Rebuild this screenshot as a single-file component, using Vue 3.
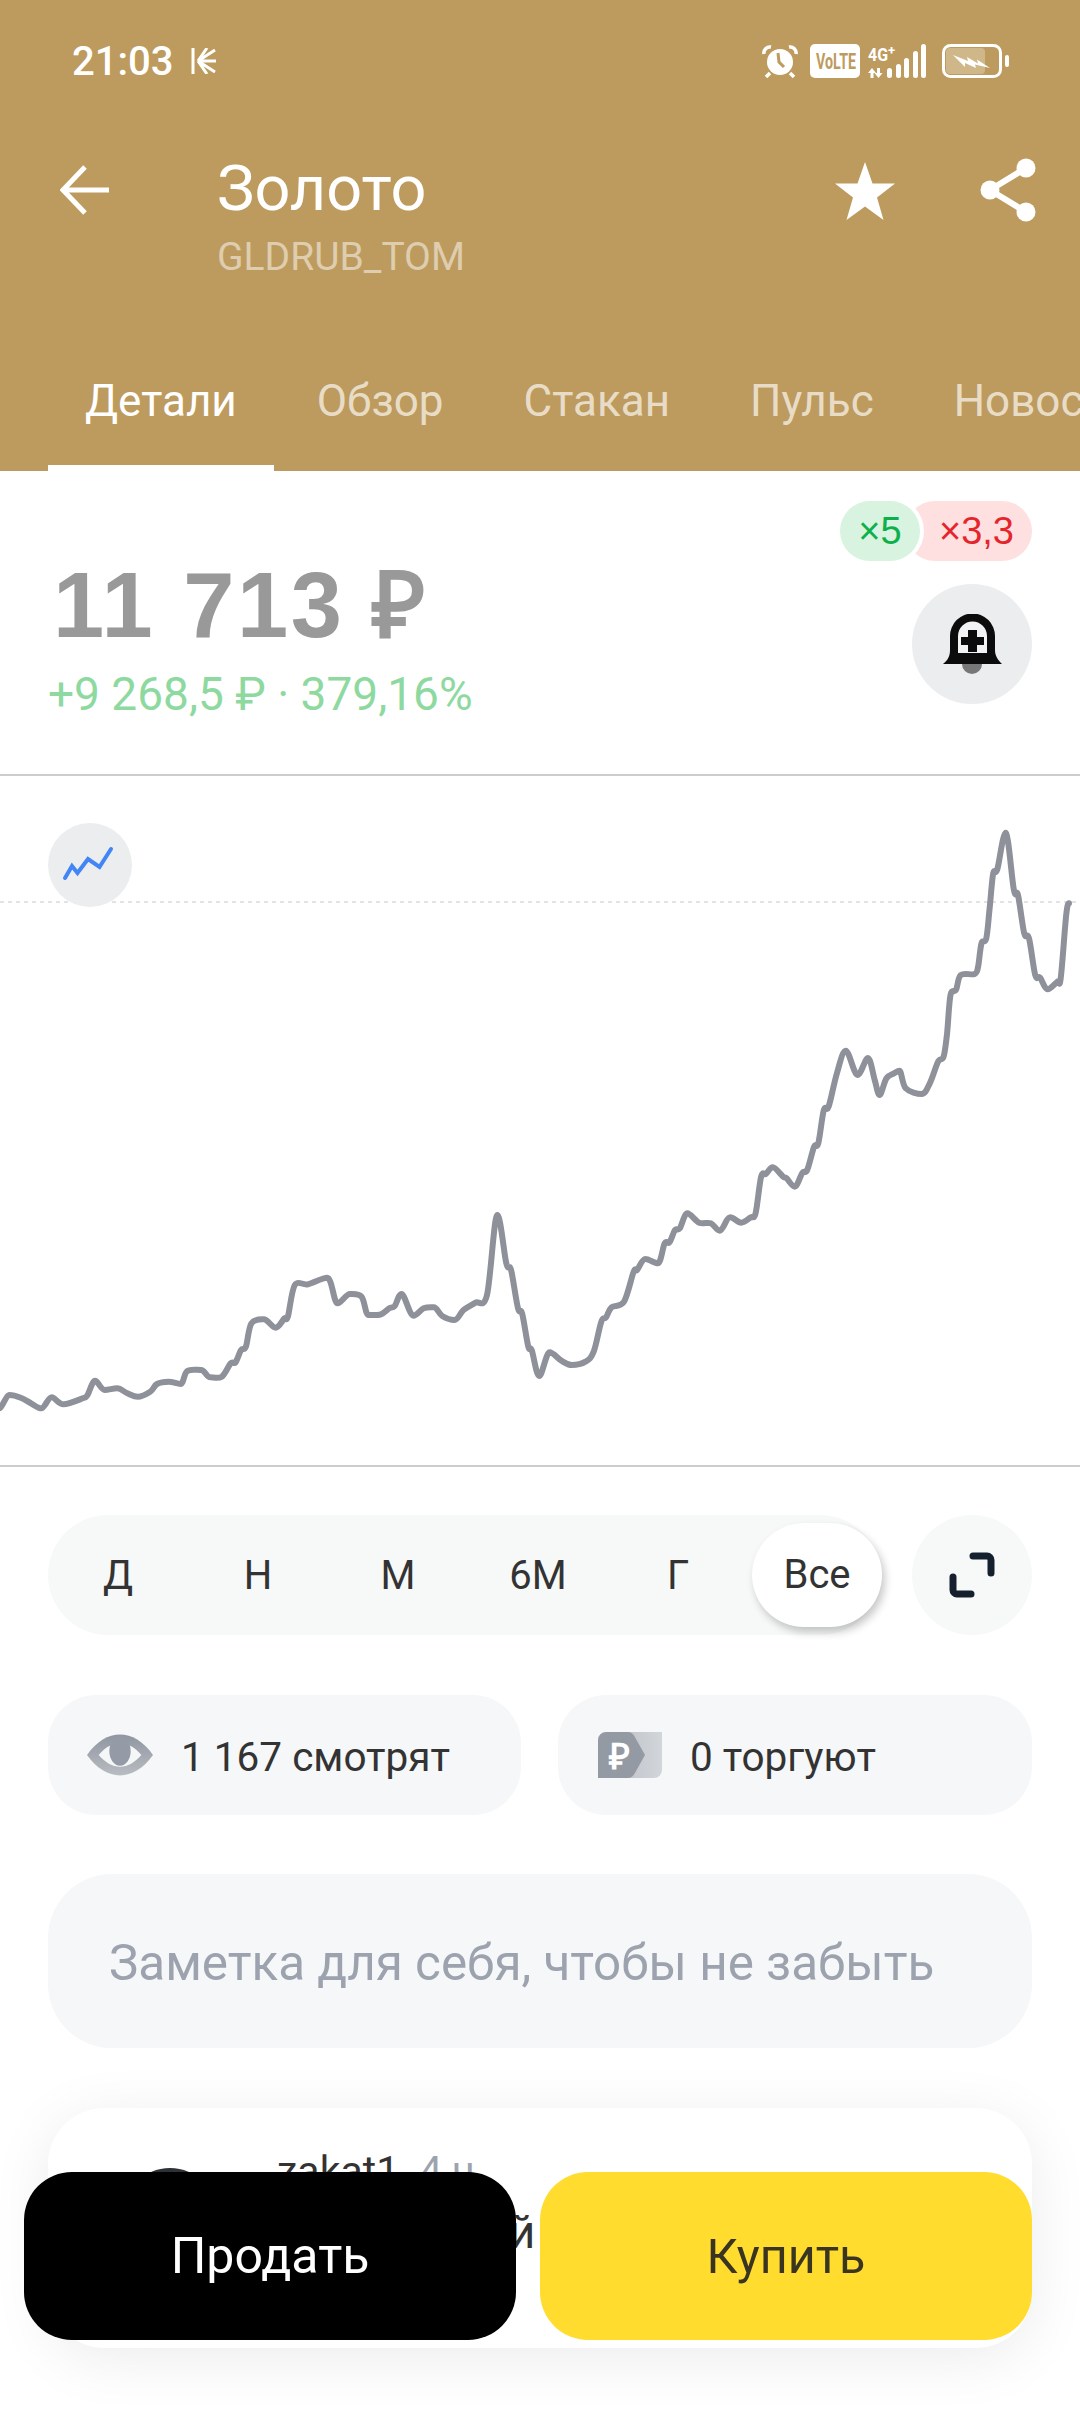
<template>
  <div class="screen">
    <header class="header">
      <div class="status">
        <span class="clock">21:03</span>
        <svg class="burst" width="26" height="26" viewBox="0 0 26 26">
          <path d="M2 0v26M7 13L24 2M7 13h18M7 13l17 11M7 13l9-13M7 13l9 13" stroke="#fff" stroke-width="3" fill="none" />
        </svg>
        <div class="status-right">
          <svg width="36" height="34" viewBox="0 0 36 34">
            <circle cx="18" cy="18" r="13" fill="#fff" />
            <path d="M16 9l1 9 5 5" stroke="#bd9b5e" stroke-width="3" fill="none" />
            <path d="M2 10a6 6 0 0 1 7-7M34 10a6 6 0 0 0-7-7M8 29l-4 4M28 29l4 4" stroke="#fff" stroke-width="3.500" fill="none" />
          </svg>
          <svg class="volte" width="50" height="34" viewBox="0 0 50 34">
            <rect width="50" height="34" rx="5" fill="#fff" />
            <text x="6" y="25" textLength="40" lengthAdjust="spacingAndGlyphs" class="volte-text">VoLTE</text>
          </svg>
          <svg class="signal" width="62" height="34" viewBox="0 0 62 34">
            <text x="0" y="17" textLength="20" lengthAdjust="spacingAndGlyphs" class="net">4G</text>
            <text x="20" y="11" class="net-plus">+</text>
            <path d="M4 24l4 5H5.500v5h-3v-5H0zM9 24h3v5h2.500l-4 5-4-5H9z" fill="#fff" />
            <rect x="19" y="24" width="5" height="10" rx="2.500" fill="#fff" />
            <rect x="28" y="20" width="5" height="14" rx="2.500" fill="#fff" />
            <rect x="36" y="14" width="5" height="20" rx="2.500" fill="#fff" />
            <rect x="45" y="7" width="5" height="27" rx="2.500" fill="#fff" />
            <rect x="53" y="0" width="5" height="34" rx="2.500" fill="#fff" />
          </svg>
          <svg class="battery" width="68" height="34" viewBox="0 0 68 34">
            <rect x="1.500" y="1.500" width="57" height="31" rx="7" fill="none" stroke="#fff" stroke-width="3" />
            <rect x="4" y="4" width="39" height="26" rx="4" fill="#fff" fill-opacity=".28" />
            <path d="M11 11l15 6-1-4 11 6.500-1-4L48 24l-15-3.500 1 3.500-11-5v4z" fill="#fff" />
            <rect x="63" y="11" width="4" height="12" rx="2" fill="#fff" />
          </svg>
        </div>
      </div>
      <div class="nav">
        <svg class="back" width="50" height="50" viewBox="0 0 50 50">
          <path d="M25 2L3 25l22 23M3 25h46" stroke="#fff" stroke-width="5" fill="none" />
        </svg>
        <div class="title-block">
          <div class="title">Золото</div>
          <div class="ticker">GLDRUB_TOM</div>
        </div>
        <svg class="star" width="60" height="58" viewBox="0 0 60 58">
          <path d="M30 0l7.500 21.500H60L42 35.500 48.500 58 30 44.500 11.500 58 18 35.500 0 21.500h22.500z" fill="#fff" />
        </svg>
        <svg class="share" width="56" height="64" viewBox="0 0 56 64">
          <path d="M46 10L10 32l36 22" stroke="#fff" stroke-width="6" fill="none" />
          <circle cx="46" cy="10" r="9.500" fill="#fff" />
          <circle cx="10" cy="32" r="9.500" fill="#fff" />
          <circle cx="46" cy="54" r="9.500" fill="#fff" />
        </svg>
      </div>
      <div class="tabs">
        <span
          v-for="(tab, i) in tabs"
          :key="tab"
          class="tab"
          :class="{ active: i === 0 }"
        >{{ tab }}</span>
      </div>
    </header>

    <section class="price-row">
      <div class="price-info">
        <div class="price">11 713 ₽</div>
        <div class="change">+9 268,5 ₽ · 379,16%</div>
      </div>
      <div class="price-side">
        <div class="badges">
          <span class="badge long">×5</span>
          <span class="badge short">×3,3</span>
        </div>
        <button class="bell">
          <svg width="60" height="60" viewBox="0 0 60 60">
            <path d="M20 50a10 10 0 0 0 20 0z" fill="#777" />
            <path d="M1 50c5-4 7-8 7-14V22a22 22 0 0 1 45 0v14c0 6 3 10 7 14z" fill="#0c0c0c" />
            <path d="M16 39V22a14.500 14.500 0 0 1 29 0v17z" fill="#f2f3f4" />
            <path d="M26 16h9v7h7v8h-7v7h-9v-7h-7v-8h7z" fill="#0c0c0c" />
          </svg>
        </button>
      </div>
    </section>

    <section class="chart">
      <svg class="chart-svg" width="1080" height="689" viewBox="0 776 1080 689">
        <line x1="0" y1="902" x2="1080" y2="902" stroke="#e2e3e5" stroke-width="2" stroke-dasharray="4 4" />
        <path :d="chartPath" fill="none" stroke="#8e9199" stroke-width="6" stroke-linejoin="round" stroke-linecap="round" />
      </svg>
      <div class="chart-toggle">
        <svg width="56" height="40" viewBox="4 3 56 40">
          <path d="M7 36l7-12 5.500 7L30 17l11.500 8L53 7" stroke="#4285f4" stroke-width="4" fill="none" stroke-linecap="round" />
        </svg>
      </div>
    </section>

    <section class="body">
      <div class="range-row">
        <div class="range">
          <span
            v-for="r in ranges"
            :key="r"
            class="range-item"
            :class="{ selected: r === 'Все' }"
          >{{ r }}</span>
        </div>
        <button class="expand">
          <svg width="48" height="48" viewBox="0 0 48 48">
            <path d="M25 5h14a4 4 0 0 1 4 4v13M5 26v13a4 4 0 0 0 4 4h14" stroke="#14202e" stroke-width="7" fill="none" stroke-linecap="round" />
          </svg>
        </button>
      </div>

      <div class="stats">
        <div class="stat">
          <svg class="eye" width="66" height="42" viewBox="0 0 68 42">
            <defs>
              <linearGradient id="eyeFill" x1="0" y1="0" x2="0" y2="1">
                <stop offset="0" stop-color="#8f96a1" />
                <stop offset="1" stop-color="#b9bcc1" />
              </linearGradient>
            </defs>
            <path d="M0 21C10 7 22 0 34 0s24 7 34 21C58 35 46 42 34 42S10 35 0 21z" fill="url(#eyeFill)" />
            <path d="M12 21c7-8 14-12 22-12s15 4 22 12c-7 8-14 12-22 12s-15-4-22-12z" fill="#f5f6f8" />
            <ellipse cx="34" cy="17" rx="11" ry="15" fill="#959ba6" />
          </svg>
          <span>1 167 смотрят</span>
        </div>
        <div class="stat">
          <svg width="64" height="46" viewBox="0 0 64 46">
            <defs>
              <linearGradient id="backFill" x1="0" y1="0" x2="1" y2="0">
                <stop offset="0" stop-color="#bfc3c9" />
                <stop offset="1" stop-color="#d2d5da" />
              </linearGradient>
            </defs>
            <path d="M20 0h44v38a8 8 0 0 1-8 8H20z" fill="url(#backFill)" />
            <path d="M0 8a8 8 0 0 1 8-8h22c4 0 6 3 8 7l9 16-9 16c-2 4-4 7-8 7H0z" fill="#949aa4" />
            <text x="21" y="37" class="rub-mark">₽</text>
          </svg>
          <span>0 торгуют</span>
        </div>
      </div>

      <div class="note">Заметка для себя, чтобы не забыть</div>

      <div class="post">
        <div class="avatar"></div>
        <div class="post-text">
          <div class="post-head"><b>zakat1</b> <span>4 ч</span></div>
          <div class="post-line">Российский</div>
        </div>
      </div>
    </section>

    <div class="actions">
      <button class="action sell">Продать</button>
      <button class="action buy">Купить</button>
    </div>
  </div>
</template>

<script setup>
const tabs = ['Детали', 'Обзор', 'Стакан', 'Пульс', 'Новости']
const ranges = ['Д', 'Н', 'М', '6М', 'Г', 'Все']

// traced from the reference: lower part of the curve, then the top part
const lower = [
  [0, 985], [14, 945], [30, 953], [45, 970], [60, 985], [75, 952], [92, 973], [120, 955], [127, 945], [138, 902],
  [152, 930], [170, 925], [185, 940], [200, 950], [218, 935], [228, 912], [245, 905], [262, 912], [272, 873], [292, 870],
  [305, 892], [322, 890], [335, 850], [342, 847], [350, 810], [357, 800], [365, 730], [383, 718], [400, 743], [413, 715],
  [418, 710], [428, 615], [447, 613], [475, 593], [490, 670], [508, 642], [525, 650], [535, 705], [553, 703], [565, 685],
  [573, 678], [583, 642], [600, 707], [615, 685], [630, 682], [642, 708], [660, 720], [673, 690], [690, 668], [707, 645],
  [722, 405], [735, 550], [742, 570], [752, 685], [758, 700], [767, 800], [772, 810], [783, 888], [798, 817], [815, 842],
  [830, 855], [850, 845], [862, 815], [873, 725], [880, 712], [888, 682], [906, 665], [920, 575], [925, 570], [937, 537],
  [955, 550], [965, 490], [972, 487], [980, 450], [987, 445], [998, 400], [1015, 428], [1032, 430], [1045, 452], [1060, 412],
  [1076, 428], [1090, 412], [1097, 400], [1105, 290], [1112, 282], [1122, 262], [1137, 290], [1142, 295], [1154, 320], [1165, 278],
  [1172, 270], [1182, 200], [1188, 190], [1196, 90], [1203, 80]
]
const upper = [
  [1215, 880], [1228, 812], [1245, 885], [1260, 834], [1270, 900], [1277, 945], [1287, 895], [1298, 880], [1306, 872], [1315, 925],
  [1338, 942], [1350, 910], [1362, 845], [1370, 830], [1375, 760], [1380, 645], [1388, 630], [1395, 585], [1415, 582], [1420, 560],
  [1425, 490], [1432, 475], [1437, 380], [1442, 280], [1448, 268], [1460, 158], [1472, 330], [1478, 345], [1487, 460],
  [1494, 475], [1503, 585], [1510, 593], [1521, 628], [1535, 605], [1540, 595], [1548, 405], [1552, 370]
]

const sx = 1080 / 1568
const points = [
  ...lower.map(([x, y]) => [x * sx, y / 3 + 1080]),
  ...upper.map(([x, y]) => [x * sx, y / 3 + 780])
]

// tangent per point, flat on local peaks so the curve does not overshoot them
const tangents = points.map((p, i) => {
  const a = points[i - 1] || p
  const c = points[i + 1] || p
  const flat = (p[1] - a[1]) * (c[1] - p[1]) <= 0
  return [(c[0] - a[0]) / 6, flat ? 0 : (c[1] - a[1]) / 6]
})

const chartPath = points.reduce((d, p, i) => {
  if (i === 0) return `M${p[0].toFixed(1)} ${p[1].toFixed(1)}`
  const b = points[i - 1]
  const c1x = b[0] + tangents[i - 1][0]
  const c1y = b[1] + tangents[i - 1][1]
  const c2x = p[0] - tangents[i][0]
  const c2y = p[1] - tangents[i][1]
  return `${d}C${c1x.toFixed(1)} ${c1y.toFixed(1)} ${c2x.toFixed(1)} ${c2y.toFixed(1)} ${p[0].toFixed(1)} ${p[1].toFixed(1)}`
}, '')
</script>

<style>
html, body {
  margin: 0;
  background: #fff;
}
</style>

<style scoped>
.screen {
  position: relative;
  width: 1080px;
  height: 2412px;
  overflow: hidden;
  background: #fff;
  font-family: Roboto, "Noto Sans", sans-serif;
  color: #333;
}

button {
  border: none;
  padding: 0;
  font-family: inherit;
}

.header {
  height: 471px;
  background: #bd9b5e;
  color: #fff;
  display: flex;
  flex-direction: column;
}

.status {
  height: 122px;
  display: flex;
  align-items: center;
  padding: 0 70px 0 72px;
}

.clock {
  font-size: 40px;
  font-weight: 500;
}

.burst {
  margin-left: 18px;
}

.status-right {
  margin-left: auto;
  display: flex;
  align-items: center;
}

.volte {
  margin-left: 12px;
}

.volte-text {
  font-size: 22px;
  font-weight: 700;
  fill: #bd9b5e;
}

.signal {
  margin-left: 8px;
}

.net {
  font-size: 19px;
  font-weight: 700;
  fill: #fff;
}

.net-plus {
  font-size: 13px;
  font-weight: 700;
  fill: #fff;
}

.battery {
  margin-left: 12px;
}

.nav {
  display: flex;
  align-items: flex-start;
  padding: 29px 44px 0 60px;
}

.back {
  margin-top: 14px;
}

.title-block {
  margin-left: 107px;
}

.title {
  font-size: 63px;
  line-height: 76px;
}

.ticker {
  margin-top: 5px;
  font-size: 39px;
  line-height: 50px;
  color: rgba(255, 255, 255, 0.5);
}

.star {
  margin-left: auto;
  margin-top: 11px;
}

.share {
  margin-left: 85px;
  margin-top: 7px;
}

.tabs {
  margin-top: auto;
  display: flex;
  padding-left: 48px;
  overflow: hidden;
  white-space: nowrap;
}

.tab {
  padding: 0 37px 38px;
  font-size: 44px;
  line-height: 52px;
  color: rgba(255, 255, 255, 0.68);
  border-bottom: 6px solid transparent;
  margin-right: 6px;
}

.tab.active {
  color: #fff;
  border-bottom-color: #fff;
}

.price-row {
  height: 305px;
  box-sizing: border-box;
  display: flex;
  justify-content: space-between;
  padding: 30px 48px 0;
  border-bottom: 2px solid #cccccc;
}

.price-info {
  padding-top: 58px;
}

.price {
  margin-left: 5px;
  font-family: "Liberation Sans", Arial, sans-serif;
  font-size: 92px;
  font-weight: 700;
  line-height: 92px;
  letter-spacing: 2.500px;
  color: #999;
}

.change {
  margin-top: 18px;
  font-size: 46px;
  line-height: 50px;
  color: #8ed9a0;
}

.price-side {
  display: flex;
  flex-direction: column;
  align-items: flex-end;
}

.badges {
  display: flex;
}

.badge {
  height: 60px;
  border-radius: 30px;
  font-family: "Liberation Sans", Arial, sans-serif;
  font-size: 38px;
  line-height: 60px;
  text-align: center;
}

.long {
  position: relative;
  width: 80px;
  background: #d8f3e0;
  color: #0db14b;
  box-shadow: 0 0 0 4px #fff;
}

.short {
  width: 127px;
  margin-left: -15px;
  padding-left: 16px;
  box-sizing: border-box;
  background: #ffe0e1;
  color: #e5252c;
}

.bell {
  margin-top: 23px;
  width: 120px;
  height: 120px;
  border-radius: 50%;
  background: #ebedef;
  display: flex;
  align-items: center;
  justify-content: center;
}

.chart {
  position: relative;
  height: 691px;
  box-sizing: border-box;
  border-bottom: 2px solid #cccccc;
}

.chart-svg {
  display: block;
}

.chart-toggle {
  position: absolute;
  left: 48px;
  top: 47px;
  width: 84px;
  height: 84px;
  border-radius: 50%;
  background: #ebedef;
  display: flex;
  align-items: center;
  justify-content: center;
}

.body {
  padding: 48px 48px 0;
}

.range-row {
  display: flex;
  justify-content: space-between;
}

.range {
  width: 832px;
  height: 120px;
  box-sizing: border-box;
  border-radius: 60px;
  background: #f7f8f8;
  display: flex;
  align-items: center;
}

.range-item {
  width: 140px;
  flex-shrink: 0;
  font-size: 40px;
  text-align: center;
}

.range-item.selected {
  width: 130px;
  height: 104px;
  margin-left: 4px;
  line-height: 104px;
  border-radius: 52px;
  background: #fff;
  box-shadow: 3px 5px 8px rgba(0, 0, 0, 0.22);
}

.expand {
  width: 120px;
  height: 120px;
  border-radius: 50%;
  background: #f7f8f8;
  display: flex;
  align-items: center;
  justify-content: center;
}

.stats {
  margin-top: 60px;
  display: grid;
  grid-template-columns: 473px 474px;
  gap: 37px;
}

.stat {
  height: 120px;
  border-radius: 48px;
  background: #f6f7f8;
  display: flex;
  align-items: center;
  gap: 28px;
  padding-left: 40px;
  font-size: 40.500px;
}

.eye {
  margin-left: -1px;
}

.stat span {
  margin-top: 3px;
}

.rub-mark {
  font-family: "Liberation Sans", Arial, sans-serif;
  font-size: 36px;
  font-weight: 700;
  fill: #fff;
  text-anchor: middle;
}

.note {
  margin-top: 59px;
  height: 174px;
  border-radius: 64px;
  background: #f6f7f8;
  padding-left: 61px;
  font-size: 49.400px;
  line-height: 178px;
  color: #9da3ae;
}

.post {
  margin-top: 60px;
  height: 240px;
  border-radius: 56px;
  background: #fff;
  box-shadow: 0 10px 60px rgba(0, 0, 0, 0.08);
  display: flex;
  padding: 41px 0 0 74px;
  box-sizing: border-box;
}

.avatar {
  width: 96px;
  height: 96px;
  margin-top: 19px;
  border-radius: 50%;
  background: #2c3236;
}

.post-text {
  margin-left: 59px;
}

.post-head {
  font-size: 41px;
  line-height: 44px;
}

.post-head b {
  font-weight: 400;
}

.post-head span {
  margin-left: 10px;
  color: #9da3ae;
}

.post-line {
  margin-top: 12px;
  font-size: 46px;
  line-height: 54px;
}

.actions {
  position: absolute;
  left: 24px;
  top: 2172px;
  width: 1008px;
  display: flex;
  gap: 24px;
}

.action {
  flex: 1;
  height: 168px;
  border-radius: 48px;
  font-size: 50px;
}

.sell {
  background: #000;
  color: #fff;
}

.buy {
  background: #ffdc2d;
  color: #3a3520;
  font-size: 48.500px;
}
</style>
